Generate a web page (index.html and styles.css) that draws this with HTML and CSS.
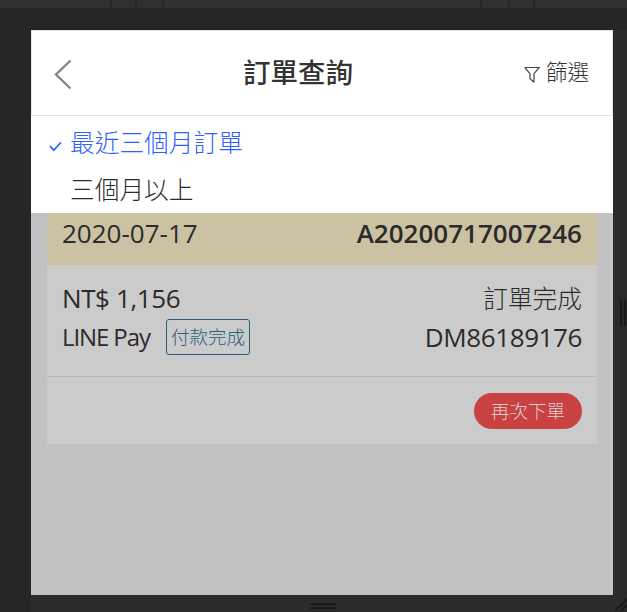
FILE: index.html
```
<!DOCTYPE html>
<html lang="zh-Hant">
<head>
<meta charset="utf-8">
<title>訂單查詢</title>
<link rel="stylesheet" href="styles.css">
</head>
<body>
<div class="ruler"><i></i><i></i><i></i><i></i><i></i><i></i></div>
<div class="stage">
  <main class="device">
    <header class="header">
      <svg class="back" width="20" height="32" viewBox="0 0 20 32"><path d="M17.5 2.5 3 16.5 17.5 30.5" fill="none" stroke="#858585" stroke-width="2.4"/></svg>
      <h1 class="title">訂單查詢</h1>
      <div class="filter">
        <svg width="16" height="17" viewBox="0 0 16 17"><path d="M.8 1.5H15.2L10 7.6V16.2M.8 1.5 6 7.6V12.8L10 16.2" fill="none" stroke="#444" stroke-width="1.2"/></svg>
        <span>篩選</span>
      </div>
    </header>
    <nav class="menu">
      <div class="option selected">
        <svg width="13" height="11" viewBox="0 0 13 11"><path d="M1 5.2 4.8 9.2 12 1.3" fill="none" stroke="#2f5fff" stroke-width="1.7"/></svg>
        <span>最近三個月訂單</span>
      </div>
      <div class="option"><span>三個月以上</span></div>
    </nav>
    <section class="card">
      <div class="card-head"><span class="date">2020-07-17</span><span class="order">A20200717007246</span></div>
      <div class="card-body">
        <div class="row"><span class="price">NT$ 1,156</span><span class="status">訂單完成</span></div>
        <div class="row"><span class="pay">LINE Pay</span><span class="tag">付款完成</span><span class="invoice">DM86189176</span></div>
      </div>
      <div class="card-foot"><span class="again">再次下單</span></div>
    </section>
  </main>
  <div class="grip-side"><i></i><i></i></div>
</div>
<div class="grip-bottom"><i></i><i></i></div>
<svg class="corner" width="12" height="16" viewBox="0 0 12 16"><path d="M0 15 12 3M6 15 12 9" stroke="#1a1a1a" stroke-width="2"/></svg>
</body>
</html>
```
FILE: styles.css
```
* { box-sizing: border-box; }
body {
  margin: 0;
  width: 627px;
  height: 612px;
  overflow: hidden;
  position: relative;
  background: #262626;
  color: #2b2b2b;
  font-family: "Open Sans", "Noto Sans CJK TC", sans-serif;
  font-size: 26px;
}
.ruler { height: 8px; background: #303030; display: flex; padding-left: 110px; }
.ruler i { width: 2px; height: 7px; background: #262626; margin-right: 23px; }
.ruler i:nth-child(2) { margin-right: 25px; }
.ruler i:nth-child(3) { margin-right: 316px; }
.ruler i:nth-child(4) { margin-right: 26px; }
.stage { display: flex; padding: 22px 0 0 31px; height: 587px; }
.device { width: 582px; height: 565px; background: #c2c2c2; flex: none; }
.header {
  height: 86px;
  background: #fff;
  border: 1px solid #e3e3e3;
  display: grid;
  grid-template-columns: 190px auto 1fr;
  align-items: center;
  padding: 0 23px 0 21px;
}
.back { margin-top: 2px; }
.title { margin: 0; font-size: 27.5px; font-weight: 500; line-height: 40px; color: #333; }
.filter {
  justify-self: end;
  display: flex;
  align-items: center;
  gap: 6px;
  font-size: 21.5px;
  font-weight: 300;
  line-height: 30px;
  color: #333;
}
.filter svg { margin-top: 3px; }
.filter span { position: relative; top: -1px; }
.menu { height: 97px; background: #fff; padding: 3px 0 0 18px; }
.option {
  height: 47px;
  display: flex;
  align-items: center;
  font-size: 24.7px;
  font-weight: 300;
  line-height: 36px;
  padding-left: 21px;
}
.selected { color: #2f5fff; padding-left: 0; gap: 8px; }
.selected svg { margin-top: 8px; }
.card { margin: 0 16px; background: #cbcbcb; }
.card-head {
  height: 52px;
  background: #cbc2a3;
  display: flex;
  justify-content: space-between;
  padding: 2px 15px 0;
  line-height: 36px;
}
.order { font-weight: 600; }
.card-body { height: 112px; border-bottom: 1px solid #b7b7b7; padding: 14px 15px 0; }
.row { display: flex; align-items: center; height: 39px; line-height: 39px; }
.status, .invoice { margin-left: auto; }
.status { font-size: 24.7px; font-weight: 300; }
.price { letter-spacing: -.4px; }
.invoice { letter-spacing: -.4px; }
.pay { font-size: 24px; width: 104px; white-space: nowrap; letter-spacing: -1.1px; margin-top: -2px; }
.tag {
  width: 84px;
  height: 36px;
  margin-top: -2px;
  border: 1px solid #26607e;
  border-radius: 3px;
  color: #26607e;
  font-size: 18.5px;
  font-weight: 300;
  line-height: 34px;
  text-align: center;
}
.card-foot { height: 67px; display: flex; justify-content: flex-end; padding: 16px 15px 0; }
.again {
  width: 108px;
  height: 36px;
  border-radius: 18px;
  background: #c94141;
  color: #e0d0d0;
  font-size: 18.5px;
  font-weight: 300;
  line-height: 36px;
  text-align: center;
}
.grip-side { width: 14px; flex: none; background: #2b2b2b; display: flex; gap: 2px; padding: 270px 0 0 7px; }
.grip-side i { width: 2px; height: 26px; background: #1a1a1a; }
.grip-bottom { height: 17px; margin-left: 31px; background: #2b2b2b; padding: 8px 0 0 279px; }
.grip-bottom i { display: block; width: 26px; height: 2px; background: #1a1a1a; margin-bottom: 2px; }
.corner { position: absolute; right: 0; bottom: 0; }
```
